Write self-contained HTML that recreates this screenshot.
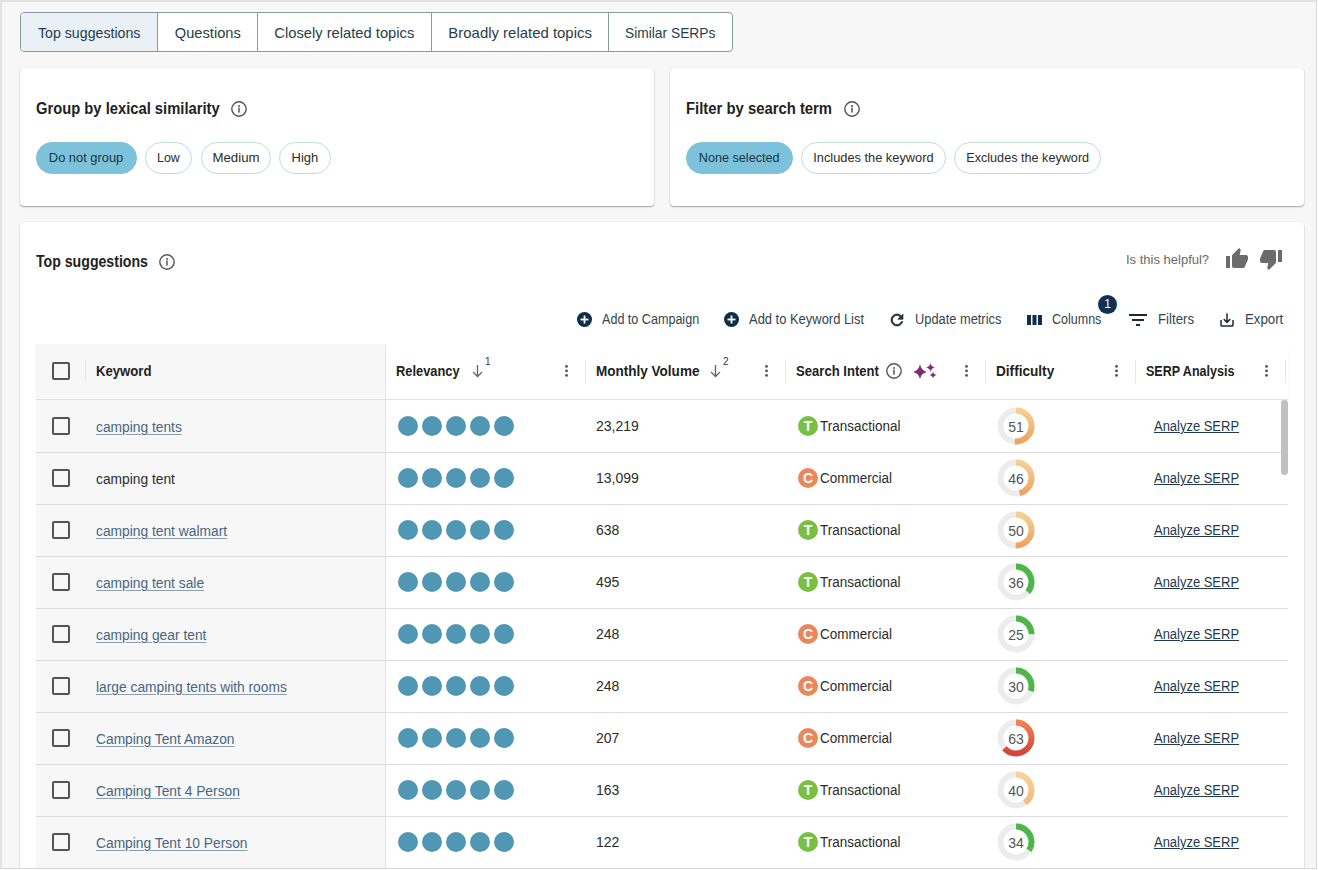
<!DOCTYPE html>
<html><head><meta charset="utf-8">
<style>
*{box-sizing:border-box;margin:0;padding:0}
html,body{width:1318px;height:870px;overflow:hidden;background:#fff}
body{font-family:"Liberation Sans",sans-serif;position:relative;color:#222}
#frame{position:absolute;left:0;top:0;width:1317px;height:869px;background:#f8f7f8;overflow:hidden}
#bord{position:absolute;left:0;top:0;width:1317px;height:869px;border-left:2px solid #e4e3e4;border-top:2px solid #e4e3e4;border-right:1px solid #d8d7d8;border-bottom:1px solid #d8d7d8;pointer-events:none}
.a{position:absolute;white-space:nowrap;line-height:1}
/* tabs */
#tabs{position:absolute;left:20px;top:12px;height:40px;display:flex;border:1px solid #889a9f;border-radius:4px;overflow:hidden;background:#fff}
#tabs .tab{height:38px;line-height:40px;font-size:15px;color:#2a3c48;text-align:center;border-left:1px solid #889a9f;white-space:nowrap}
#tabs .tab:first-child{border-left:none;background:#e9f1f6}
.card{position:absolute;background:#fff;border-radius:4px;box-shadow:0 1px 1.5px rgba(0,0,0,.35),0 0 1px rgba(0,0,0,.1)}
.ttl{position:absolute;font-weight:bold;font-size:16px;line-height:16px;color:#222;white-space:nowrap}
.pill{position:absolute;top:142px;height:32px;line-height:30px;border-radius:16px;border:1px solid #c2dde2;font-size:13.5px;color:#2b2b2b;text-align:center;white-space:nowrap;background:#fff}
.pill.on{background:#7dc2da;border-color:#7dc2da;color:#1b3547}
.act{position:absolute;top:312px;font-size:14px;line-height:14px;color:#34444f;white-space:nowrap}
/* table */
#thead{position:absolute;left:36px;top:344px;width:1252px;height:56px;background:#fff;border-bottom:1px solid #e2e1e2;box-shadow:0 1px 2px rgba(0,0,0,.06)}
#thead .kwh{position:absolute;left:0;top:0;width:350px;height:55px;background:#f8f7f8;border-right:1px solid #e4e4e4}
.th{position:absolute;top:364px;font-size:14px;line-height:14px;font-weight:bold;color:#222;white-space:nowrap}
.vd{position:absolute;top:360px;width:1px;height:23px;background:#e6e6e6}
.keb{position:absolute;top:364px;width:3px;height:14px}
.sup{position:absolute;font-size:10px;line-height:10px;color:#333}
.row{position:absolute;left:36px;width:1244px;height:52px;background:#fff}
.rline{position:absolute;left:36px;width:1252px;height:1px;background:#dddcdd}
.kwcol{position:absolute;left:0;top:0;width:350px;height:52px;background:#f8f7f8;border-right:1px solid #e2e2e2}
.cb{position:absolute;left:16px;top:17px;width:18px;height:18px;border:2px solid #545454;border-radius:2px}
.kw{position:absolute;left:60px;top:20px;font-size:14px;line-height:14px;white-space:nowrap;transform:scaleX(0.985);transform-origin:0 50%}
.kwl{color:#47657f;text-decoration:underline;text-decoration-color:#8aa0b0;text-underline-offset:2px}
.kwp{color:#2b2b2b}
.dots{position:absolute;left:362px;top:16px;display:flex;gap:4px}
.dots i{display:block;width:20px;height:20px;border-radius:50%;background:#5097b3}
.mv{position:absolute;left:560px;top:19px;font-size:14px;line-height:14px;color:#2b2b2b}
.badge{position:absolute;left:762px;top:16px;width:20px;height:20px;border-radius:50%;color:#fff;font-weight:bold;font-size:14px;line-height:21px;text-align:center}
.bT{background:#78c043}.bC{background:#e9885c}
.itxt{position:absolute;left:784px;top:19px;font-size:14px;line-height:14px;color:#2b2b2b;transform:scaleX(0.963);transform-origin:0 50%}
.ring{position:absolute;left:961px;top:7px}
.rnum{position:absolute;left:961px;top:20px;width:38px;text-align:center;font-size:14px;line-height:14px;color:#555}
.serp{position:absolute;left:1118px;top:19px;font-size:14px;line-height:14px;color:#223a4c;text-decoration:underline;text-underline-offset:1px;transform:scaleX(0.926);transform-origin:0 50%}
#sb{position:absolute;left:1281px;top:400px;width:7px;height:75px;border-radius:4px;background:#c1c1c1}
</style></head>
<body>
<div id="frame">
  <svg width="0" height="0" style="position:absolute">
    <defs>
      <linearGradient id="gO" x1="1" y1="0" x2="0" y2="0"><stop offset="0" stop-color="#f7cf92"/><stop offset="1" stop-color="#eea35f"/></linearGradient>
      <linearGradient id="gL" x1="1" y1="0" x2="0" y2="0"><stop offset="0" stop-color="#f8d29a"/><stop offset="1" stop-color="#f3b978"/></linearGradient>
      <linearGradient id="gR" x1="1" y1="0" x2="0" y2="0"><stop offset="0" stop-color="#ee8155"/><stop offset="1" stop-color="#d3453a"/></linearGradient>
      <g id="info"><circle cx="8" cy="8" r="7.2" fill="none" stroke="#555" stroke-width="1.4"/><circle cx="8" cy="4.9" r="1" fill="#555"/><rect x="7.25" y="6.6" width="1.5" height="5" fill="#555"/></g>
      <g id="keb"><circle cx="1.5" cy="2.4" r="1.45" fill="#555"/><circle cx="1.5" cy="6.9" r="1.45" fill="#555"/><circle cx="1.5" cy="11.4" r="1.45" fill="#555"/></g>
      <g id="plus"><circle cx="7.5" cy="7.5" r="7.5" fill="#0e2d4b"/><rect x="3.5" y="6.6" width="8" height="1.8" fill="#fff"/><rect x="6.6" y="3.5" width="1.8" height="8" fill="#fff"/></g>
      <g id="arr"><path d="M5.5 1 V12.5 M1 8 L5.5 12.5 L10 8" fill="none" stroke="#666" stroke-width="1.3"/></g>
    </defs>
  </svg>

  <div id="tabs">
    <div class="tab" style="width:136px"><span style="display:inline-block;transform:scaleX(0.945)">Top suggestions</span></div>
    <div class="tab" style="width:100px"><span style="display:inline-block;transform:scaleX(0.978)">Questions</span></div>
    <div class="tab" style="width:174px"><span style="display:inline-block;transform:scaleX(0.982)">Closely related topics</span></div>
    <div class="tab" style="width:177px"><span style="display:inline-block;transform:scaleX(0.995)">Broadly related topics</span></div>
    <div class="tab" style="width:124px"><span style="display:inline-block;transform:scaleX(0.919)">Similar SERPs</span></div>
  </div>

  <div class="card" style="left:20px;top:68px;width:634px;height:138px"></div>
  <div class="card" style="left:670px;top:68px;width:634px;height:138px"></div>
  <div class="ttl" style="left:36px;top:101px;transform:scaleX(0.922);transform-origin:0 50%;">Group by lexical similarity</div>
  <svg class="a" style="left:231px;top:101px" width="16" height="16"><use href="#info"/></svg>
  <div class="pill on" style="left:36px;width:101px"><span style="display:inline-block;transform:scaleX(0.953)">Do not group</span></div>
  <div class="pill" style="left:145px;width:47px"><span style="display:inline-block;transform:scaleX(0.92)">Low</span></div>
  <div class="pill" style="left:201px;width:70px"><span style="display:inline-block;transform:scaleX(0.98)">Medium</span></div>
  <div class="pill" style="left:279px;width:52px"><span style="display:inline-block;transform:scaleX(0.96)">High</span></div>

  <div class="ttl" style="left:686px;top:101px;transform:scaleX(0.928);transform-origin:0 50%;">Filter by search term</div>
  <svg class="a" style="left:844px;top:101px" width="16" height="16"><use href="#info"/></svg>
  <div class="pill on" style="left:686px;width:107px"><span style="display:inline-block;transform:scaleX(0.936)">None selected</span></div>
  <div class="pill" style="left:801px;width:145px"><span style="display:inline-block;transform:scaleX(0.948)">Includes the keyword</span></div>
  <div class="pill" style="left:954px;width:147px"><span style="display:inline-block;transform:scaleX(0.936)">Excludes the keyword</span></div>

  <div class="card" style="left:20px;top:222px;width:1284px;height:700px"></div>
  <div class="ttl" style="left:36px;top:254px;transform:scaleX(0.883);transform-origin:0 50%;">Top suggestions</div>
  <svg class="a" style="left:159px;top:254px" width="16" height="16"><use href="#info"/></svg>
  <div class="a" style="left:1126px;top:253px;font-size:13px;color:#6a6a6a">Is this helpful?</div>
  <svg class="a" style="left:1225px;top:247px" width="24" height="24" viewBox="0 0 24 24"><path fill="#6b6b6b" d="M1 21h4V9H1v12zm22-11c0-1.1-.9-2-2-2h-6.31l.95-4.57.03-.32c0-.41-.17-.79-.44-1.06L14.17 1 7.59 7.59C7.22 7.95 7 8.45 7 9v10c0 1.1.9 2 2 2h9c.83 0 1.54-.5 1.84-1.22l3.02-7.05c.09-.23.14-.47.14-.73v-2z"/></svg>
  <svg class="a" style="left:1259px;top:247px" width="24" height="24" viewBox="0 0 24 24"><path fill="#6b6b6b" d="M15 3H6c-.83 0-1.540.5-1.84 1.22l-3.02 7.050c-.09.23-.14.47-.14.73v2c0 1.1.9 2 2 2h6.31l-.95 4.57-.03.32c0 .41.17.79.44 1.06L9.83 23l6.59-6.59c.36-.36.58-.86.58-1.41V5c0-1.1-.9-2-2-2zm4 0v12h4V3h-4z"/></svg>

  <!-- action bar -->
  <svg class="a" style="left:577px;top:312px" width="15" height="15"><use href="#plus"/></svg>
  <div class="act" style="left:602px;transform:scaleX(0.898);transform-origin:0 50%;">Add to Campaign</div>
  <svg class="a" style="left:724px;top:312px" width="15" height="15"><use href="#plus"/></svg>
  <div class="act" style="left:749px;transform:scaleX(0.924);transform-origin:0 50%;">Add to Keyword List</div>
  <svg class="a" style="left:888px;top:311px" width="18" height="18" viewBox="0 0 24 24"><path fill="#252f36" stroke="#252f36" stroke-width="0.9" d="M17.65 6.35C16.2 4.9 14.21 4 12 4c-4.42 0-7.990 3.58-7.990 8s3.57 8 7.99 8c3.73 0 6.84-2.55 7.73-6h-2.08c-.82 2.33-3.04 4-5.65 4-3.31 0-6-2.69-6-6s2.69-6 6-6c1.66 0 3.14.69 4.22 1.78L13 11h7V4l-2.35 2.35z"/></svg>
  <div class="act" style="left:915px;transform:scaleX(0.917);transform-origin:0 50%;">Update metrics</div>
  <svg class="a" style="left:1027px;top:315px" width="15" height="10"><rect x="0" y="0" width="4" height="10" fill="#0e2d4b"/><rect x="5.5" y="0" width="4" height="10" fill="#0e2d4b"/><rect x="11" y="0" width="4" height="10" fill="#0e2d4b"/></svg>
  <div class="act" style="left:1052px;transform:scaleX(0.893);transform-origin:0 50%;">Columns</div>
  <div class="a" style="left:1098px;top:295px;width:19px;height:19px;border-radius:50%;background:#0f3152;color:#fff;font-size:12px;line-height:19px;text-align:center">1</div>
  <svg class="a" style="left:1126px;top:308px" width="24" height="24" viewBox="0 0 24 24"><path fill="#1c2a35" d="M10 18h4v-2h-4v2zM3 6v2h18V6H3zm3 7h12v-2H6v2z"/></svg>
  <div class="act" style="left:1158px;transform:scaleX(0.945);transform-origin:0 50%;">Filters</div>
  <svg class="a" style="left:1218px;top:311px" width="18" height="18" viewBox="0 0 24 24"><path fill="#1c2a35" d="M19 12v7H5v-7H3v7c0 1.1.9 2 2 2h14c1.1 0 2-.9 2-2v-7h-2zm-6 .67l2.59-2.58L17 11.5l-5 5-5-5 1.41-1.41L11 12.67V3h2z"/></svg>
  <div class="act" style="left:1245px;transform:scaleX(0.946);transform-origin:0 50%;">Export</div>

  <!-- table header -->
  <div id="thead"><div class="kwh"></div></div>
  <div class="cb" style="left:52px;top:362px"></div>
  <div class="vd" style="left:85px"></div>
  <div class="th" style="left:96px;transform:scaleX(0.939);transform-origin:0 50%;">Keyword</div>
  <div class="th" style="left:396px;transform:scaleX(0.918);transform-origin:0 50%;">Relevancy</div>
  <svg class="a" style="left:472px;top:364px" width="11" height="14"><use href="#arr"/></svg>
  <div class="sup" style="left:485px;top:357px">1</div>
  <svg class="keb" style="left:565px"><use href="#keb"/></svg>
  <div class="vd" style="left:585px"></div>
  <div class="th" style="left:596px;transform:scaleX(0.966);transform-origin:0 50%;">Monthly Volume</div>
  <svg class="a" style="left:710px;top:364px" width="11" height="14"><use href="#arr"/></svg>
  <div class="sup" style="left:723px;top:357px">2</div>
  <svg class="keb" style="left:765px"><use href="#keb"/></svg>
  <div class="vd" style="left:785px"></div>
  <div class="th" style="left:796px;transform:scaleX(0.935);transform-origin:0 50%;">Search Intent</div>
  <svg class="a" style="left:886px;top:363px" width="16" height="16"><use href="#info"/></svg>
  <svg class="a" style="left:912px;top:362px" width="26" height="18" viewBox="0 0 26 18"><path fill="#7f2c76" d="M8 2 Q9.2 8.8 15 10 Q9.2 11.2 8 17 Q6.8 11.2 1 10 Q6.8 8.8 8 2Z M18.5 1 Q19.1 4.9 23 5.5 Q19.1 6.1 18.5 10 Q17.9 6.1 14 5.5 Q17.9 4.9 18.5 1Z M21 10 Q21.5 12.5 24.5 13 Q21.5 13.5 21 16.5 Q20.5 13.5 17.5 13 Q20.5 12.5 21 10Z"/></svg>
  <svg class="keb" style="left:965px"><use href="#keb"/></svg>
  <div class="vd" style="left:985px"></div>
  <div class="th" style="left:996px;transform:scaleX(0.972);transform-origin:0 50%;">Difficulty</div>
  <svg class="keb" style="left:1115px"><use href="#keb"/></svg>
  <div class="vd" style="left:1135px"></div>
  <div class="th" style="left:1146px;transform:scaleX(0.894);transform-origin:0 50%;">SERP Analysis</div>
  <svg class="keb" style="left:1265px"><use href="#keb"/></svg>
  <div class="vd" style="left:1285px"></div>

<div class="row" style="top:400px"><div class="kwcol"></div><div class="cb"></div><div class="kw"><span class="kwl">camping tents</span></div><div class="dots"><i></i><i></i><i></i><i></i><i></i></div><div class="mv">23,219</div><div class="badge bT">T</div><div class="itxt">Transactional</div><svg class="ring" width="38" height="38" viewBox="0 0 38 38"><circle cx="19" cy="19" r="15.5" fill="none" stroke="#ececec" stroke-width="6"/><circle cx="19" cy="19" r="15.5" fill="none" stroke="url(#gO)" stroke-width="6" stroke-dasharray="49.67 97.39" transform="rotate(-90 19 19)"/></svg><div class="rnum">51</div><div class="serp">Analyze SERP</div></div>
<div class="row" style="top:452px"><div class="kwcol"></div><div class="cb"></div><div class="kw"><span class="kwp">camping tent</span></div><div class="dots"><i></i><i></i><i></i><i></i><i></i></div><div class="mv">13,099</div><div class="badge bC">C</div><div class="itxt">Commercial</div><svg class="ring" width="38" height="38" viewBox="0 0 38 38"><circle cx="19" cy="19" r="15.5" fill="none" stroke="#ececec" stroke-width="6"/><circle cx="19" cy="19" r="15.5" fill="none" stroke="url(#gO)" stroke-width="6" stroke-dasharray="44.80 97.39" transform="rotate(-90 19 19)"/></svg><div class="rnum">46</div><div class="serp">Analyze SERP</div></div>
<div class="row" style="top:504px"><div class="kwcol"></div><div class="cb"></div><div class="kw"><span class="kwl">camping tent walmart</span></div><div class="dots"><i></i><i></i><i></i><i></i><i></i></div><div class="mv">638</div><div class="badge bT">T</div><div class="itxt">Transactional</div><svg class="ring" width="38" height="38" viewBox="0 0 38 38"><circle cx="19" cy="19" r="15.5" fill="none" stroke="#ececec" stroke-width="6"/><circle cx="19" cy="19" r="15.5" fill="none" stroke="url(#gO)" stroke-width="6" stroke-dasharray="48.69 97.39" transform="rotate(-90 19 19)"/></svg><div class="rnum">50</div><div class="serp">Analyze SERP</div></div>
<div class="row" style="top:556px"><div class="kwcol"></div><div class="cb"></div><div class="kw"><span class="kwl">camping tent sale</span></div><div class="dots"><i></i><i></i><i></i><i></i><i></i></div><div class="mv">495</div><div class="badge bT">T</div><div class="itxt">Transactional</div><svg class="ring" width="38" height="38" viewBox="0 0 38 38"><circle cx="19" cy="19" r="15.5" fill="none" stroke="#ececec" stroke-width="6"/><circle cx="19" cy="19" r="15.5" fill="none" stroke="#4db649" stroke-width="6" stroke-dasharray="35.06 97.39" transform="rotate(-90 19 19)"/></svg><div class="rnum">36</div><div class="serp">Analyze SERP</div></div>
<div class="row" style="top:608px"><div class="kwcol"></div><div class="cb"></div><div class="kw"><span class="kwl">camping gear tent</span></div><div class="dots"><i></i><i></i><i></i><i></i><i></i></div><div class="mv">248</div><div class="badge bC">C</div><div class="itxt">Commercial</div><svg class="ring" width="38" height="38" viewBox="0 0 38 38"><circle cx="19" cy="19" r="15.5" fill="none" stroke="#ececec" stroke-width="6"/><circle cx="19" cy="19" r="15.5" fill="none" stroke="#4db649" stroke-width="6" stroke-dasharray="24.35 97.39" transform="rotate(-90 19 19)"/></svg><div class="rnum">25</div><div class="serp">Analyze SERP</div></div>
<div class="row" style="top:660px"><div class="kwcol"></div><div class="cb"></div><div class="kw"><span class="kwl">large camping tents with rooms</span></div><div class="dots"><i></i><i></i><i></i><i></i><i></i></div><div class="mv">248</div><div class="badge bC">C</div><div class="itxt">Commercial</div><svg class="ring" width="38" height="38" viewBox="0 0 38 38"><circle cx="19" cy="19" r="15.5" fill="none" stroke="#ececec" stroke-width="6"/><circle cx="19" cy="19" r="15.5" fill="none" stroke="#4db649" stroke-width="6" stroke-dasharray="29.22 97.39" transform="rotate(-90 19 19)"/></svg><div class="rnum">30</div><div class="serp">Analyze SERP</div></div>
<div class="row" style="top:712px"><div class="kwcol"></div><div class="cb"></div><div class="kw"><span class="kwl">Camping Tent Amazon</span></div><div class="dots"><i></i><i></i><i></i><i></i><i></i></div><div class="mv">207</div><div class="badge bC">C</div><div class="itxt">Commercial</div><svg class="ring" width="38" height="38" viewBox="0 0 38 38"><circle cx="19" cy="19" r="15.5" fill="none" stroke="#ececec" stroke-width="6"/><circle cx="19" cy="19" r="15.5" fill="none" stroke="url(#gR)" stroke-width="6" stroke-dasharray="61.36 97.39" transform="rotate(-90 19 19)"/></svg><div class="rnum">63</div><div class="serp">Analyze SERP</div></div>
<div class="row" style="top:764px"><div class="kwcol"></div><div class="cb"></div><div class="kw"><span class="kwl">Camping Tent 4 Person</span></div><div class="dots"><i></i><i></i><i></i><i></i><i></i></div><div class="mv">163</div><div class="badge bT">T</div><div class="itxt">Transactional</div><svg class="ring" width="38" height="38" viewBox="0 0 38 38"><circle cx="19" cy="19" r="15.5" fill="none" stroke="#ececec" stroke-width="6"/><circle cx="19" cy="19" r="15.5" fill="none" stroke="url(#gL)" stroke-width="6" stroke-dasharray="38.96 97.39" transform="rotate(-90 19 19)"/></svg><div class="rnum">40</div><div class="serp">Analyze SERP</div></div>
<div class="row" style="top:816px"><div class="kwcol"></div><div class="cb"></div><div class="kw"><span class="kwl">Camping Tent 10 Person</span></div><div class="dots"><i></i><i></i><i></i><i></i><i></i></div><div class="mv">122</div><div class="badge bT">T</div><div class="itxt">Transactional</div><svg class="ring" width="38" height="38" viewBox="0 0 38 38"><circle cx="19" cy="19" r="15.5" fill="none" stroke="#ececec" stroke-width="6"/><circle cx="19" cy="19" r="15.5" fill="none" stroke="#4db649" stroke-width="6" stroke-dasharray="33.11 97.39" transform="rotate(-90 19 19)"/></svg><div class="rnum">34</div><div class="serp">Analyze SERP</div></div>
<div class="rline" style="top:452px"></div>
<div class="rline" style="top:504px"></div>
<div class="rline" style="top:556px"></div>
<div class="rline" style="top:608px"></div>
<div class="rline" style="top:660px"></div>
<div class="rline" style="top:712px"></div>
<div class="rline" style="top:764px"></div>
<div class="rline" style="top:816px"></div>
<div class="rline" style="top:868px"></div>
  <div id="sb"></div>
</div>
<div id="bord"></div>
</body></html>
